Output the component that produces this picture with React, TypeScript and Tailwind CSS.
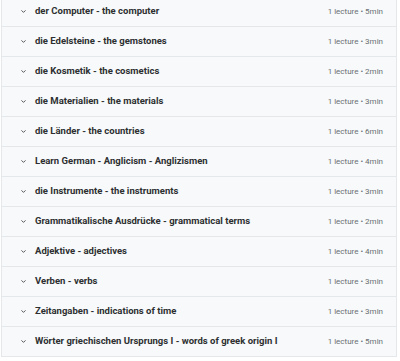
import React from "react";
import { ChevronDown } from "lucide-react";

const sections = [
  { title: "der Computer - the computer", mins: 5 },
  { title: "die Edelsteine - the gemstones", mins: 3 },
  { title: "die Kosmetik - the cosmetics", mins: 2 },
  { title: "die Materialien - the materials", mins: 3 },
  { title: "die Länder - the countries", mins: 6 },
  { title: "Learn German - Anglicism - Anglizismen", mins: 4 },
  { title: "die Instrumente - the instruments", mins: 3 },
  { title: "Grammatikalische Ausdrücke - grammatical terms", mins: 2 },
  { title: "Adjektive - adjectives", mins: 4 },
  { title: "Verben - verbs", mins: 3 },
  { title: "Zeitangaben - indications of time", mins: 3 },
  { title: "Wörter griechischen Ursprungs I - words of greek origin I", mins: 5 },
];

const App: React.FC = () => {
  return (
    <div className="h-[361px] w-[400px] overflow-hidden bg-white font-['Roboto',sans-serif]">
      <div className="mx-[1px] -mt-[3px] w-[396px] border-x border-[#e4e8eb]">
        {sections.map((s) => (
          <div
            key={s.title}
            className="flex h-[30px] items-center border-b border-[#e4e8eb] bg-[#f7f9fa] pl-[18px] pr-[13px]"
          >
            <ChevronDown size={7} strokeWidth={3} className="text-[#3e4143]" />
            <span className="ml-[8px] text-[9.5px] font-bold text-[#2d2f31]">
              {s.title}
            </span>
            <span className="ml-auto text-[8px] text-[#6a6f73]">
              1 lecture • {s.mins}min
            </span>
          </div>
        ))}
      </div>
    </div>
  );
};

export default App;
